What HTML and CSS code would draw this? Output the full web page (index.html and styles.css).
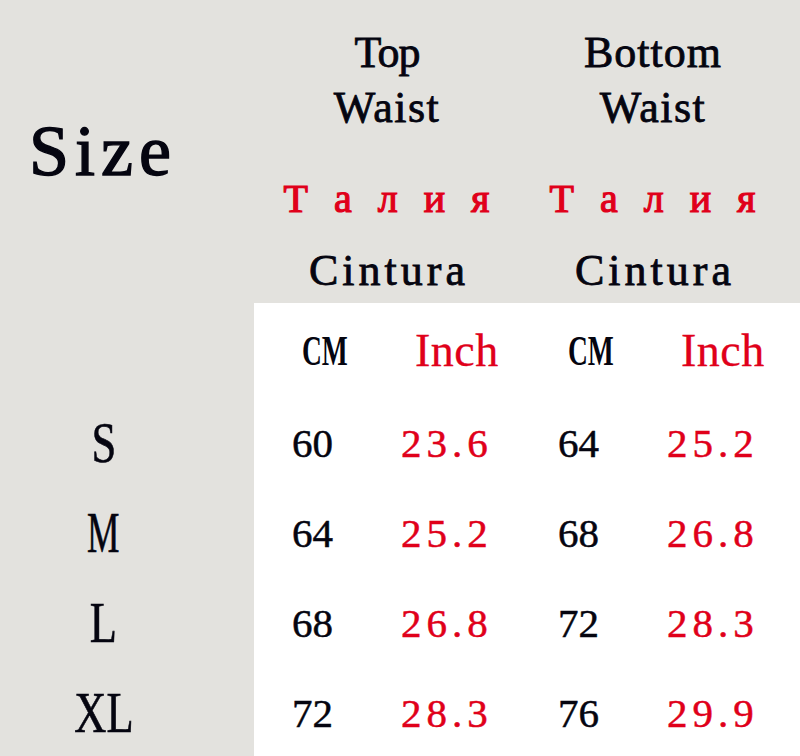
FILE: index.html
```html
<!DOCTYPE html>
<html lang="en">
<head>
<meta charset="utf-8">
<title>Size chart</title>
<link rel="stylesheet" href="styles.css">
</head>
<body>
<div class="chart">
  <header class="head">
    <div class="size-title">Size</div>
    <div class="group">
      <div class="title"><span class="w-top">Top</span><br><span class="w-waist">Waist</span></div>
      <div class="ru">Т а л и я</div>
      <div class="es">Cintura</div>
    </div>
    <div class="group">
      <div class="title"><span class="w-bottom">Bottom</span><br><span class="w-waist">Waist</span></div>
      <div class="ru">Т а л и я</div>
      <div class="es">Cintura</div>
    </div>
  </header>
  <section class="body">
    <div class="sizes">
      <div class="size"><span>S</span></div>
      <div class="size"><span class="narrow">M</span></div>
      <div class="size"><span>L</span></div>
      <div class="size"><span>XL</span></div>
    </div>
    <div class="table">
      <div class="cell unit cm"><span>CM</span></div>
      <div class="cell unit inch">Inch</div>
      <div class="cell unit cm"><span>CM</span></div>
      <div class="cell unit inch">Inch</div>

      <div class="cell val cm-val">60</div>
      <div class="cell val inch-val">23.6</div>
      <div class="cell val cm-val">64</div>
      <div class="cell val inch-val">25.2</div>

      <div class="cell val cm-val">64</div>
      <div class="cell val inch-val">25.2</div>
      <div class="cell val cm-val">68</div>
      <div class="cell val inch-val">26.8</div>

      <div class="cell val cm-val">68</div>
      <div class="cell val inch-val">26.8</div>
      <div class="cell val cm-val">72</div>
      <div class="cell val inch-val">28.3</div>

      <div class="cell val cm-val">72</div>
      <div class="cell val inch-val">28.3</div>
      <div class="cell val cm-val">76</div>
      <div class="cell val inch-val">29.9</div>
    </div>
  </section>
</div>
</body>
</html>
```

FILE: styles.css
```css
html, body {
  margin: 0;
  padding: 0;
}

body {
  background: #e3e2de;
  font-family: "Liberation Serif", "Times New Roman", serif;
  color: #050510;
}

.chart {
  width: 800px;
  height: 756px;
  overflow: hidden;
}

/* ---------- header ---------- */
.head {
  display: grid;
  grid-template-columns: 254px 266px 266px 1fr;
  height: 303px;
}

.size-title {
  font-size: 72px;
  line-height: 72px;
  padding: 115px 0 0 29px;
  letter-spacing: 6px;
  -webkit-text-stroke: 1.4px currentColor;
}

.group {
  text-align: center;
  padding-top: 25px;
}

.title {
  font-size: 44px;
  line-height: 55px;
  -webkit-text-stroke: 0.8px currentColor;
}

.w-top {
  letter-spacing: -1px;
}

.w-waist {
  letter-spacing: 1.5px;
}

.w-bottom {
  letter-spacing: 1px;
}

.ru {
  font-size: 40px;
  line-height: 40px;
  margin-top: 44px;
  padding-left: 7px;
  color: #e0001a;
  letter-spacing: 8px;
  -webkit-text-stroke: 1.2px currentColor;
}

.es {
  font-size: 44px;
  line-height: 44px;
  margin-top: 30px;
  padding-left: 4px;
  letter-spacing: 4px;
  -webkit-text-stroke: 0.8px currentColor;
}

/* ---------- body ---------- */
.body {
  display: flex;
}

.sizes {
  width: 254px;
  box-sizing: border-box;
  padding: 95px 47px 0 0;
  text-align: center;
}

.size {
  height: 90px;
  font-size: 57px;
  line-height: 90px;
  -webkit-text-stroke: 0.6px currentColor;
}

.size span {
  display: inline-block;
  transform: scaleX(0.78);
}

.size span.narrow {
  transform: scaleX(0.64);
}

.table {
  flex: 1;
  height: 453px;
  background: #fff;
  display: grid;
  grid-template-columns: 133px 133px 133px 1fr;
  grid-template-rows: 95px repeat(4, 90px);
}

.cell {
  white-space: nowrap;
}

.unit {
  line-height: 95px;
}

.unit.cm {
  font-size: 43px;
  font-weight: bold;
  padding-left: 48px;
}

.unit.cm span {
  display: inline-block;
  transform: scaleX(0.64);
  transform-origin: left center;
}

.unit.inch {
  font-size: 46px;
  color: #e0001a;
  padding-left: 28px;
  letter-spacing: 0.5px;
  -webkit-text-stroke: 0.3px currentColor;
}

.val {
  font-size: 41px;
  line-height: 90px;
  -webkit-text-stroke: 0.5px currentColor;
}

.cm-val {
  padding-left: 38px;
}

.inch-val {
  padding-left: 14px;
  color: #e0001a;
  letter-spacing: 5px;
}
```
